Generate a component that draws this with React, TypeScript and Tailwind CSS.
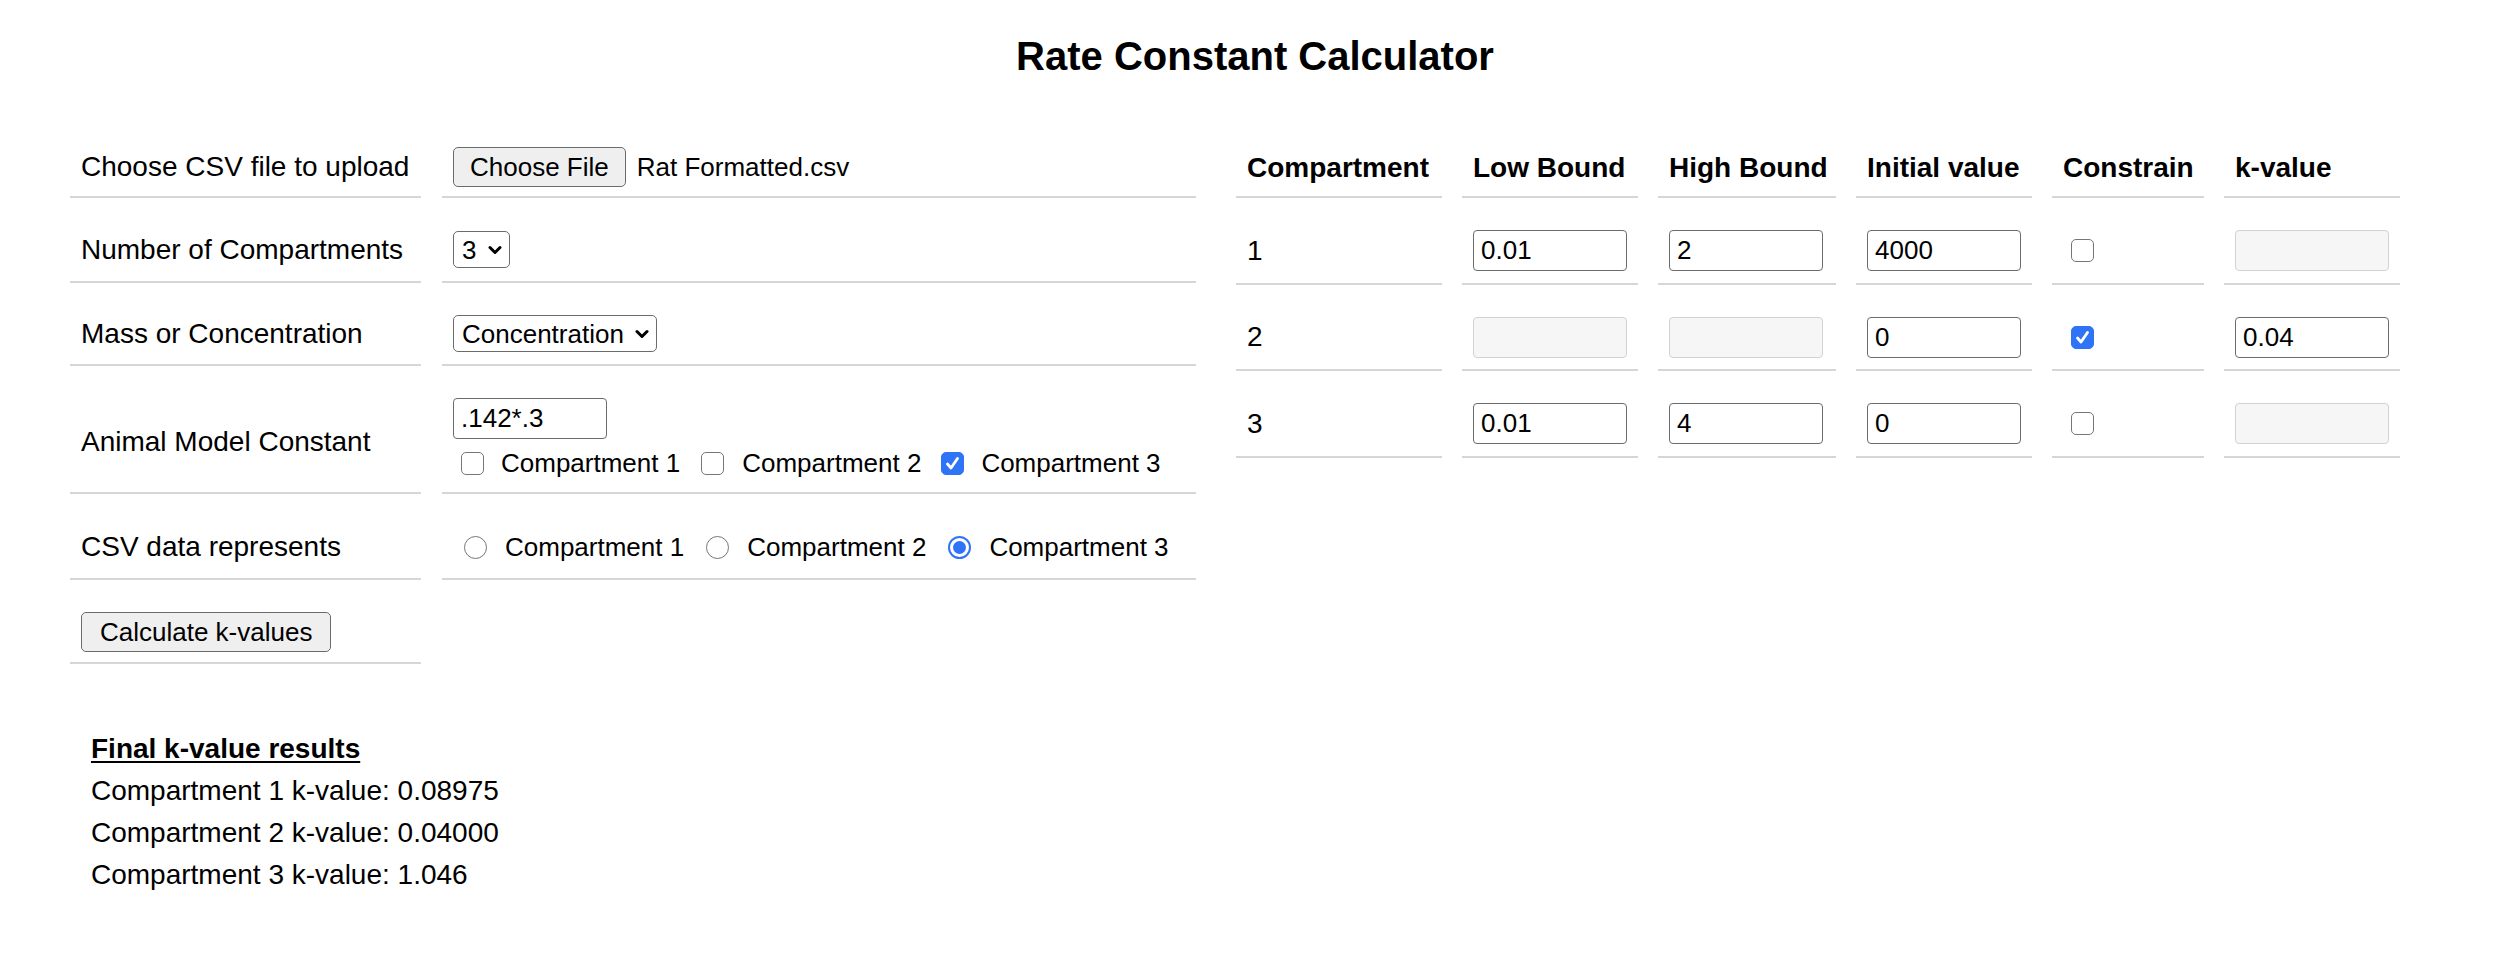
import React from "react";

const font = "font-['Liberation_Sans',Arial,Helvetica,sans-serif]";
const cell = "flex items-center whitespace-nowrap px-[11px] border-b-2 border-[#d6d6d6]";

function Chevron() {
  return (
    <svg
      className="absolute right-[8px] top-1/2 -translate-y-1/2 pointer-events-none"
      width="14"
      height="10"
      viewBox="0 0 14 10"
    >
      <path
        d="M2 2.5 L7 7.5 L12 2.5"
        stroke="black"
        strokeWidth="3"
        fill="none"
        strokeLinecap="round"
        strokeLinejoin="round"
      />
    </svg>
  );
}

function Select({ value, options }: { value: string; options: string[] }) {
  return (
    <span className="relative inline-block">
      <select
        defaultValue={value}
        className="appearance-none h-[37px] pl-[8px] pr-[32px] border-[1.5px] border-[#6b6b6b] rounded-[5px] bg-white text-[26px] leading-none text-black"
      >
        {options.map((o) => (
          <option key={o}>{o}</option>
        ))}
      </select>
      <Chevron />
    </span>
  );
}

function Box({ checked }: { checked?: boolean }) {
  return (
    <span className="relative inline-flex w-[23px] h-[23px] shrink-0">
      <input
        type="checkbox"
        defaultChecked={checked}
        className="appearance-none m-0 w-[23px] h-[23px] rounded-[5px] border-[1.5px] border-[#767676] bg-white checked:bg-[#2f74f6] checked:border-[#2f74f6]"
      />
      {checked && (
        <svg
          className="absolute inset-0 pointer-events-none"
          width="23"
          height="23"
          viewBox="0 0 23 23"
        >
          <path
            d="M6.5 12 L10 16 L16.5 6.5"
            stroke="white"
            strokeWidth="2.8"
            fill="none"
            strokeLinecap="round"
            strokeLinejoin="round"
          />
        </svg>
      )}
    </span>
  );
}

function Radio({ checked }: { checked?: boolean }) {
  return checked ? (
    <span className="inline-flex w-[23px] h-[23px] shrink-0 rounded-full border-[2px] border-[#2f74f6] bg-white items-center justify-center">
      <span className="w-[13px] h-[13px] rounded-full bg-[#2f74f6]" />
    </span>
  ) : (
    <span className="inline-flex w-[23px] h-[23px] shrink-0 rounded-full border-[1.5px] border-[#767676] bg-white" />
  );
}

function TextInput({ value, disabled }: { value?: string; disabled?: boolean }) {
  return (
    <input
      type="text"
      defaultValue={value}
      disabled={disabled}
      className={
        disabled
          ? "w-[154px] h-[41px] px-[7px] rounded-[4px] border-[1.5px] border-[#d2d2d2] bg-[#f6f6f6] text-[26px]"
          : "w-[154px] h-[41px] px-[7px] rounded-[4px] border-[1.5px] border-[#6b6b6b] bg-white text-[26px] text-black"
      }
    />
  );
}

const compartments = [
  { id: "1", low: "0.01", high: "2", init: "4000", constrain: false, k: "" },
  { id: "2", low: "", high: "", init: "0", constrain: true, k: "0.04" },
  { id: "3", low: "0.01", high: "4", init: "0", constrain: false, k: "" },
];

const results = [
  "Compartment 1 k-value: 0.08975",
  "Compartment 2 k-value: 0.04000",
  "Compartment 3 k-value: 1.046",
];

export default function App() {
  return (
    <div className={`${font} bg-white text-black w-[2510px] h-[960px] overflow-hidden`}>
      <h1 className="pt-[33px] text-center text-[40px] leading-[46px] font-bold">
        Rate Constant Calculator
      </h1>

      <div className="flex items-start mt-[53px] ml-[70px]">
        {/* form */}
        <div className="grid grid-cols-[351px_754px] gap-x-[21px] gap-y-[20px] text-[28px]">
          <div className={`${cell} h-[66px] pt-[6px]`}>Choose CSV file to upload</div>
          <div className={`${cell} h-[66px] pt-[6px]`}>
            <button className="h-[40px] px-[16px] rounded-[5px] border-[1.5px] border-[#6b6b6b] bg-[#efefef] text-[26px]">
              Choose File
            </button>
            <span className="ml-[11px] text-[26px]">Rat Formatted.csv</span>
          </div>

          <div className={`${cell} h-[65px]`}>Number of Compartments</div>
          <div className={`${cell} h-[65px]`}>
            <Select value="3" options={["1", "2", "3"]} />
          </div>

          <div className={`${cell} h-[63px]`}>Mass or Concentration</div>
          <div className={`${cell} h-[63px]`}>
            <Select value="Concentration" options={["Mass", "Concentration"]} />
          </div>

          <div className={`${cell} h-[108px] pt-[5px]`}>Animal Model Constant</div>
          <div className={`${cell} h-[108px] pt-[5px]`}>
            <div className="flex flex-col">
              <TextInput value=".142*.3" />
              <div className="flex items-center h-[46px] pt-[2px] text-[26px]">
                <span className="ml-[8px] mr-[17px] flex"><Box /></span>
                <span className="mr-[13px]">Compartment 1</span>
                <span className="ml-[8px] mr-[18px] flex"><Box /></span>
                <span className="mr-[12px]">Compartment 2</span>
                <span className="ml-[8px] mr-[17px] flex"><Box checked /></span>
                <span>Compartment 3</span>
              </div>
            </div>
          </div>

          <div className={`${cell} h-[66px] pt-[2px]`}>CSV data represents</div>
          <div className={`${cell} h-[66px] pt-[2px] text-[26px]`}>
            <span className="ml-[11px] mr-[18px] flex"><Radio /></span>
            <span className="mr-[13px]">Compartment 1</span>
            <span className="ml-[9px] mr-[18px] flex"><Radio /></span>
            <span className="mr-[13px]">Compartment 2</span>
            <span className="ml-[9px] mr-[18px] flex"><Radio checked /></span>
            <span>Compartment 3</span>
          </div>

          <div className={`${cell} h-[64px] pt-[2px]`}>
            <button className="h-[40px] px-[18px] rounded-[5px] border-[1.5px] border-[#6b6b6b] bg-[#efefef] text-[26px]">
              Calculate k-values
            </button>
          </div>
          <div />
        </div>

        {/* compartments table */}
        <div className="ml-[40px] grid grid-cols-[206px_176px_178px_176px_152px_176px] gap-x-[20px] gap-y-[20px] text-[28px]">
          {["Compartment", "Low Bound", "High Bound", "Initial value", "Constrain", "k-value"].map(
            (h) => (
              <div key={h} className={`${cell} h-[66px] pt-[7px] font-bold`}>
                {h}
              </div>
            )
          )}
          {compartments.map((c, i) => (
            <React.Fragment key={c.id}>
              <div className={`${cell} ${i === 1 ? "h-[66px]" : "h-[67px]"}`}>{c.id}</div>
              <div className={`${cell} ${i === 1 ? "h-[66px]" : "h-[67px]"}`}>
                <TextInput value={c.low} disabled={c.constrain} />
              </div>
              <div className={`${cell} ${i === 1 ? "h-[66px]" : "h-[67px]"}`}>
                <TextInput value={c.high} disabled={c.constrain} />
              </div>
              <div className={`${cell} ${i === 1 ? "h-[66px]" : "h-[67px]"}`}>
                <TextInput value={c.init} />
              </div>
              <div className={`${cell} ${i === 1 ? "h-[66px]" : "h-[67px]"}`}>
                <span className="ml-[8px] flex">
                  <Box checked={c.constrain} />
                </span>
              </div>
              <div className={`${cell} ${i === 1 ? "h-[66px]" : "h-[67px]"}`}>
                <TextInput value={c.k} disabled={!c.constrain} />
              </div>
            </React.Fragment>
          ))}
        </div>
      </div>

      {/* results */}
      <div className="mt-[64px] ml-[91px] text-[28px] leading-[42px]">
        <div className="font-bold underline underline-offset-[3px]">Final k-value results</div>
        {results.map((r) => (
          <div key={r}>{r}</div>
        ))}
      </div>
    </div>
  );
}
